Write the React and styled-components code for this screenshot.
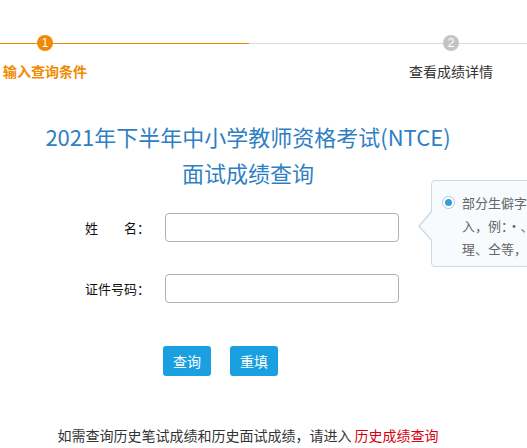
import React from "react";
import styled, { createGlobalStyle } from "styled-components";

const GlobalStyle = createGlobalStyle`
  html, body {
    margin: 0;
    padding: 0;
    background: #ffffff;
    overflow: hidden;
  }
  body {
    font-family: "Noto Sans CJK SC", "Liberation Sans", sans-serif;
    color: #333;
  }
`;

const Page = styled.div`
  position: relative;
  width: 527px;
  height: 448px;
  overflow: hidden;
`;

const StepBar = styled.div`
  position: relative;
  display: flex;
  justify-content: space-between;
  padding-right: 31px;

  &::before,
  &::after {
    content: "";
    position: absolute;
    top: 43px;
    height: 1px;
  }
  &::before {
    left: 0;
    width: 249px;
    background: #f08a00;
  }
  &::after {
    left: 249px;
    right: 0;
    background: #dcdcdc;
  }
`;

const Step = styled.div`
  position: relative;
  z-index: 1;
  width: 90px;
  display: flex;
  flex-direction: column;
  align-items: center;
`;

const StepDot = styled.span`
  margin-top: 35px;
  width: 16px;
  height: 16px;
  border-radius: 50%;
  background: ${(p) => (p.$active ? "#f08a00" : "#c4c4c4")};
  color: #fff;
  font-family: "Liberation Sans", sans-serif;
  font-size: 12px;
  line-height: 16px;
  text-align: center;
`;

const StepLabel = styled.span`
  margin-top: 10px;
  font-size: 14px;
  line-height: 20px;
  white-space: nowrap;
  font-weight: ${(p) => (p.$active ? "bold" : "normal")};
  color: ${(p) => (p.$active ? "#f08a00" : "#333")};
`;

const Main = styled.div`
  width: 496px;
`;

const Title = styled.h1`
  margin: 37px 0 0;
  font-size: 22px;
  font-weight: normal;
  line-height: 36px;
  text-align: center;
  color: #2f80c3;
`;

const Form = styled.div`
  margin-top: 23px;
  display: flex;
  flex-direction: column;
  gap: 32px;
`;

const Row = styled.div`
  display: flex;
  align-items: center;
  padding-left: 85px;
`;

const Label = styled.label`
  width: 80px;
  font-size: 13px;
  color: #111;
  white-space: pre;
`;

const Input = styled.input`
  box-sizing: border-box;
  width: 234px;
  height: 29px;
  border: 1px solid #b0b0b0;
  border-radius: 4px;
  outline: none;
  padding: 0 8px;
  font-size: 13px;
`;

const Buttons = styled.div`
  margin-top: 43px;
  padding-left: 163px;
  display: flex;
  gap: 19px;
`;

const Button = styled.button`
  width: 48px;
  height: 30px;
  border: none;
  border-radius: 3px;
  background: #1a9fe0;
  color: #fff;
  font-family: inherit;
  font-size: 14px;
  padding: 0;
  cursor: pointer;
`;

const Footer = styled.p`
  margin: 49px 0 0;
  font-size: 14px;
  line-height: 20px;
  text-align: center;
  color: #333;
  white-space: nowrap;
`;

const Link = styled.a`
  color: #d7000f;
  text-decoration: none;
`;

const Tip = styled.div`
  position: absolute;
  left: 431px;
  top: 180px;
  box-sizing: border-box;
  width: 220px;
  height: 87px;
  padding: 10px 0 0 30px;
  background: #f7fbfe;
  border: 1px solid #c9dbe8;
  border-radius: 4px;
  font-size: 13px;
  line-height: 23px;
  color: #666;

  &::before,
  &::after {
    content: "";
    position: absolute;
    width: 0;
    height: 0;
    border-style: solid;
    border-color: transparent;
  }
  &::before {
    left: -14px;
    top: 29px;
    border-width: 16px 14px 16px 0;
    border-right-color: #c9dbe8;
  }
  &::after {
    left: -12px;
    top: 30px;
    border-width: 15px 13px 15px 0;
    border-right-color: #f7fbfe;
  }
`;

const Radio = styled.span`
  position: absolute;
  left: 10px;
  top: 15px;
  box-sizing: border-box;
  width: 13px;
  height: 13px;
  border-radius: 50%;
  border: 1px solid #a9c9df;
  background: #fff;

  &::after {
    content: "";
    position: absolute;
    left: 2px;
    top: 2px;
    width: 7px;
    height: 7px;
    border-radius: 50%;
    background: #3a9bd6;
  }
`;

const TipLine = styled.div`
  white-space: nowrap;
`;

const TipEm = styled.span`
  color: #1a8ad8;
`;

export default function App() {
  return (
    <Page>
      <GlobalStyle />
      <StepBar>
        <Step>
          <StepDot $active>1</StepDot>
          <StepLabel $active>输入查询条件</StepLabel>
        </Step>
        <Step>
          <StepDot>2</StepDot>
          <StepLabel>查看成绩详情</StepLabel>
        </Step>
      </StepBar>
      <Main>
        <Title>
          2021年下半年中小学教师资格考试(NTCE)
          <br />
          面试成绩查询
        </Title>
        <Form>
          <Row>
            <Label>姓{"\u2003\u2003"}名：</Label>
            <Input type="text" />
          </Row>
          <Row>
            <Label>证件号码：</Label>
            <Input type="text" />
          </Row>
        </Form>
        <Buttons>
          <Button>查询</Button>
          <Button>重填</Button>
        </Buttons>
        <Footer>
          如需查询历史笔试成绩和历史面试成绩，请进入 <Link href="#">历史成绩查询</Link>
        </Footer>
      </Main>
      <Tip>
        <Radio />
        <TipLine>部分生僻字无法输</TipLine>
        <TipLine>入，例：·、䶮、</TipLine>
        <TipLine>
          瑆、仝等，<TipEm>请用拼音</TipEm>
        </TipLine>
      </Tip>
    </Page>
  );
}
